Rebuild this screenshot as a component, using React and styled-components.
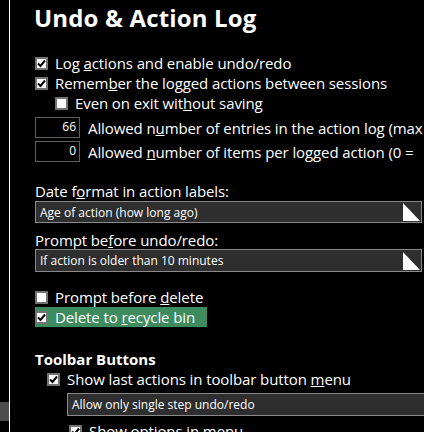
import React from "react";
import styled, { createGlobalStyle } from "styled-components";

const GlobalStyle = createGlobalStyle`
  html, body { margin: 0; padding: 0; background: #000; overflow: hidden; }
  body { font-family: "Open Sans", "Noto Sans", sans-serif; color: #fff; }
  #root { width: 424px; height: 432px; overflow: hidden; }
`;

const Frame = styled.div`
  display: flex;
  width: 424px;
  height: 432px;
  overflow: hidden;
`;

const Gutter = styled.div`
  width: 9px;
  flex-shrink: 0;
  border-right: 1px solid #fff;
  display: flex;
  flex-direction: column;
  justify-content: flex-end;
`;

const Thumb = styled.div`
  height: 19px;
  margin-bottom: 11px;
  background: #4d4d4d;
`;

const Content = styled.div`
  flex: 1;
  min-width: 0;
  padding-left: 25px;
  display: flex;
  flex-direction: column;
  align-items: flex-start;
  white-space: nowrap;
  overflow: hidden;
  & > * { flex-shrink: 0; }
`;

const Title = styled.h1`
  margin: 0 0 0 -1px;
  height: 53px;
  padding-top: 1px;
  box-sizing: border-box;
  font-size: 24px;
  font-weight: 700;
  line-height: 34px;
  letter-spacing: 0.15px;
`;

const CheckRow = styled.div`
  display: flex;
  align-items: center;
  gap: 7px;
  height: 20px;
  font-size: 15px;
  letter-spacing: -0.1px;
  margin-left: ${(p) => p.$indent || 0}px;
  margin-top: ${(p) => p.$top || 0}px;
  padding-right: ${(p) => (p.$highlight ? 12 : 0)}px;
  background: ${(p) => (p.$highlight ? "#3d8b5e" : "transparent")};
`;

const Box = styled.span`
  width: 13px;
  height: 13px;
  box-sizing: border-box;
  border: 2px solid #737373;
  background: #fff;
  display: flex;
  align-items: center;
  justify-content: center;
  flex-shrink: 0;
`;

const NumRow = styled.div`
  display: flex;
  align-items: center;
  gap: 8px;
  height: 21px;
  font-size: 15px;
  letter-spacing: -0.1px;
  margin-top: ${(p) => p.$top || 0}px;
`;

const NumBox = styled.span`
  width: 45px;
  height: 21px;
  box-sizing: border-box;
  border: 1px solid #5e5e5e;
  background: #000;
  font-size: 12px;
  text-align: right;
  padding-right: 3px;
  line-height: 17px;
  letter-spacing: 0;
`;

const Label = styled.div`
  font-size: 15px;
  letter-spacing: -0.1px;
  height: 18px;
  line-height: 18px;
  margin-top: ${(p) => p.$top || 0}px;
`;

const Select = styled.div`
  align-self: stretch;
  display: flex;
  align-items: center;
  justify-content: space-between;
  height: ${(p) => p.$h || 22}px;
  box-sizing: border-box;
  border: 1px solid #8a8a8a;
  background: #2e2e2e;
  font-size: 12px;
  padding-left: 4px;
  margin-top: ${(p) => p.$top || 0}px;
  margin-left: ${(p) => p.$left || 0}px;
  margin-right: ${(p) => p.$right ?? 2}px;
`;

const Arrow = styled.svg`
  width: 17px;
  height: 18px;
  margin-right: 1px;
  flex-shrink: 0;
`;

const Heading = styled.div`
  font-size: 15px;
  font-weight: 700;
  height: 20px;
  line-height: 20px;
  margin-top: ${(p) => p.$top || 0}px;
`;

const Check = ({ on }) => (
  <Box>
    {on && (
      <svg width="9" height="9" viewBox="0 0 9 9">
        <polyline points="1,4.5 3.5,7 8,1.5" fill="none" stroke="#000" strokeWidth="2" />
      </svg>
    )}
  </Box>
);

const Drop = ({ children, ...rest }) => (
  <Select {...rest}>
    <span>{children}</span>
    <Arrow viewBox="0 0 17 18">
      <polygon points="0,0 0,18 17,18" fill="#fff" />
    </Arrow>
  </Select>
);

export default function App() {
  return (
    <>
      <GlobalStyle />
      <Frame>
        <Gutter>
          <Thumb />
        </Gutter>
        <Content>
          <Title>Undo &amp; Action Log</Title>
          <CheckRow>
            <Check on />
            <span>Log <u>a</u>ctions and enable undo/redo</span>
          </CheckRow>
          <CheckRow>
            <Check on />
            <span>Remem<u>b</u>er the logged actions between sessions</span>
          </CheckRow>
          <CheckRow $indent={20}>
            <Check />
            <span>Even on exit wit<u>h</u>out saving</span>
          </CheckRow>
          <NumRow $top={4}>
            <NumBox>66</NumBox>
            <span>Allowed n<u>u</u>mber of entries in the action log (max</span>
          </NumRow>
          <NumRow $top={3}>
            <NumBox>0</NumBox>
            <span>Allowed <u>n</u>umber of items per logged action (0 =</span>
          </NumRow>
          <Label $top={20}>Date f<u>o</u>rmat in action labels:</Label>
          <Drop $top={1}>Age of action (how long ago)</Drop>
          <Label $top={8}>Prompt be<u>f</u>ore undo/redo:</Label>
          <Drop $h={23}>If action is older than 10 minutes</Drop>
          <CheckRow $top={15}>
            <Check />
            <span>Prompt before <u>d</u>elete</span>
          </CheckRow>
          <CheckRow $highlight>
            <Check on />
            <span>Delete to <u>r</u>ecycle bin</span>
          </CheckRow>
          <Heading $top={22}>Toolbar Buttons</Heading>
          <CheckRow $indent={12}>
            <Check on />
            <span>Show last actions in toolbar button <u>m</u>enu</span>
          </CheckRow>
          <Drop $h={23} $top={4} $left={32} $right={-30}>Allow only single step undo/redo</Drop>
          <CheckRow $indent={34} $top={5}>
            <Check on />
            <span>Show options in menu</span>
          </CheckRow>
        </Content>
      </Frame>
    </>
  );
}
